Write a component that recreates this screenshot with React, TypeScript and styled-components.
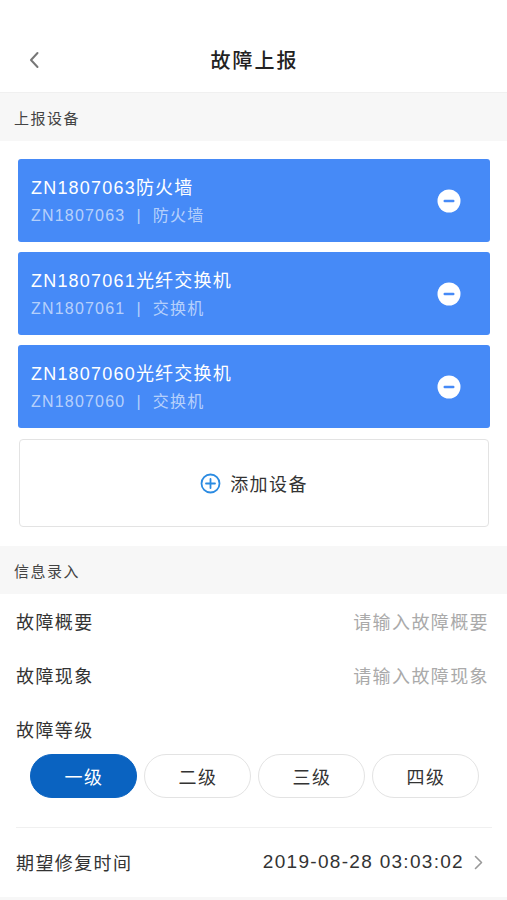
import React from "react";
import styled, { createGlobalStyle } from "styled-components";

const Global = createGlobalStyle`
  html, body { margin: 0; padding: 0; background: #ffffff; }
  body { font-family: "Noto Sans CJK SC", "Noto Sans", sans-serif; -webkit-font-smoothing: antialiased; }
  * { box-sizing: border-box; }
`;

const Page = styled.div`
  width: 507px;
  min-height: 900px;
  background: #fff;
  display: flex;
  flex-direction: column;
`;

const NavBar = styled.div`
  height: 93px;
  padding-top: 27px;
  display: grid;
  grid-template-columns: 70px 1fr 70px;
  align-items: center;
  border-bottom: 1px solid #f0f0f0;
`;

const Back = styled.div`
  display: flex;
  justify-content: center;
  padding-right: 2px;
`;

const Title = styled.div`
  text-align: center;
  font-size: 20px;
  font-weight: 500;
  color: #222;
  letter-spacing: 2px;
  padding-left: 2px;
`;

const SectionHead = styled.div`
  height: 48px;
  background: #f7f7f7;
  display: flex;
  align-items: center;
  padding-left: 14px;
  font-size: 15px;
  letter-spacing: 1.5px;
  color: #444;
`;

const DeviceList = styled.div`
  display: flex;
  flex-direction: column;
  gap: 10px;
  padding: 18px 17px 19px 18px;
`;

const DeviceCard = styled.div`
  height: 83px;
  background: #468af7;
  border-radius: 3px;
  display: flex;
  align-items: center;
  justify-content: space-between;
  padding: 0 29px 0 13px;
`;

const DeviceInfo = styled.div`
  display: flex;
  flex-direction: column;
  gap: 4px;
`;

const DeviceName = styled.div`
  font-size: 18px;
  color: #fff;
  font-family: "Liberation Sans", "Noto Sans CJK SC", sans-serif;
  letter-spacing: 1.2px;
  line-height: 26px;
`;

const DeviceMeta = styled.div`
  font-size: 16px;
  color: rgba(255, 255, 255, 0.62);
  font-family: "Liberation Sans", "Noto Sans CJK SC", sans-serif;
  letter-spacing: 1.2px;
  line-height: 22px;
  display: flex;
  gap: 11px;
`;

const AddBox = styled.div`
  height: 88px;
  margin: 1px 1px 0 1px;
  border: 1px solid #e3e3e3;
  border-radius: 4px;
  display: flex;
  align-items: center;
  justify-content: center;
  gap: 9px;
  font-size: 18px;
  letter-spacing: 1.4px;
  color: #333;
`;

const FormBody = styled.div`
  display: flex;
  flex-direction: column;
  padding: 0 15px 0 16px;
`;

const FieldRow = styled.div`
  height: 54px;
  display: flex;
  align-items: center;
  justify-content: space-between;
  font-size: 18px;
  letter-spacing: 1.4px;
  color: #333;
`;

const Placeholder = styled.span`
  color: #aaa;
  font-size: 18px;
  padding-right: 3px;
`;

const LevelLabel = styled.div`
  font-size: 18px;
  letter-spacing: 1.4px;
  color: #333;
  padding-top: 14px;
  height: 46px;
`;

const LevelRow = styled.div`
  display: flex;
  gap: 7px;
  padding: 6px 0 29px 14px;
  border-bottom: 1px solid #f0f0f0;
`;

const LevelBtn = styled.div<{ $active?: boolean }>`
  width: 107px;
  height: 44px;
  border-radius: 22px;
  display: flex;
  align-items: center;
  justify-content: center;
  font-size: 18px;
  letter-spacing: 1.4px;
  padding-left: 1px;
  background: ${(p) => (p.$active ? "#0a63c1" : "#fff")};
  color: ${(p) => (p.$active ? "#fff" : "#333")};
  border: 1px solid ${(p) => (p.$active ? "#0a63c1" : "#e3e3e3")};
`;

const TimeRow = styled.div`
  height: 68px;
  display: flex;
  align-items: center;
  justify-content: space-between;
  font-size: 18px;
  letter-spacing: 1.4px;
  color: #333;
`;

const TimeValue = styled.div`
  display: flex;
  align-items: center;
  gap: 10px;
  font-family: "Liberation Sans", "Noto Sans CJK SC", sans-serif;
  font-size: 19px;
  letter-spacing: 1.3px;
  color: #333;
  padding-right: 9px;
`;

const Footer = styled.div`
  flex: 1;
  background: #f7f7f7;
  margin-top: 1px;
`;

const MinusIcon = () => (
  <svg width="24" height="24" viewBox="0 0 24 24">
    <circle cx="12" cy="12" r="11.5" fill="#fff" />
    <rect x="6.5" y="10.8" width="11" height="2.4" rx="1.2" fill="#468af7" />
  </svg>
);

const PlusIcon = () => (
  <svg width="21" height="21" viewBox="0 0 21 21">
    <circle cx="10.5" cy="10.5" r="9" fill="none" stroke="#2b8be2" strokeWidth="1.8" />
    <path d="M10.5 6v9M6 10.5h9" stroke="#2b8be2" strokeWidth="1.8" strokeLinecap="round" />
  </svg>
);

const devices = [
  { code: "ZN1807063", name: "防火墙", type: "防火墙" },
  { code: "ZN1807061", name: "光纤交换机", type: "交换机" },
  { code: "ZN1807060", name: "光纤交换机", type: "交换机" },
];

const levels = ["一级", "二级", "三级", "四级"];

export default function App() {
  return (
    <Page>
      <Global />
      <NavBar>
        <Back>
          <svg width="12" height="20" viewBox="0 0 12 20">
            <path d="M9.5 3L3 10l6.5 7" fill="none" stroke="#777" strokeWidth="2" strokeLinecap="round" strokeLinejoin="round" />
          </svg>
        </Back>
        <Title>故障上报</Title>
        <div />
      </NavBar>
      <SectionHead>上报设备</SectionHead>
      <DeviceList>
        {devices.map((d) => (
          <DeviceCard key={d.code}>
            <DeviceInfo>
              <DeviceName>
                {d.code}
                {d.name}
              </DeviceName>
              <DeviceMeta>
                <span>{d.code}</span>
                <span>|</span>
                <span>{d.type}</span>
              </DeviceMeta>
            </DeviceInfo>
            <MinusIcon />
          </DeviceCard>
        ))}
        <AddBox>
          <PlusIcon />
          <span>添加设备</span>
        </AddBox>
      </DeviceList>
      <SectionHead>信息录入</SectionHead>
      <FormBody>
        <FieldRow>
          <span>故障概要</span>
          <Placeholder>请输入故障概要</Placeholder>
        </FieldRow>
        <FieldRow>
          <span>故障现象</span>
          <Placeholder>请输入故障现象</Placeholder>
        </FieldRow>
        <LevelLabel>故障等级</LevelLabel>
        <LevelRow>
          {levels.map((l, i) => (
            <LevelBtn key={l} $active={i === 0}>
              {l}
            </LevelBtn>
          ))}
        </LevelRow>
        <TimeRow>
          <span>期望修复时间</span>
          <TimeValue>
            <span>2019-08-28 03:03:02</span>
            <svg width="9" height="15" viewBox="0 0 9 15">
              <path d="M1.5 1.5l6 6-6 6" fill="none" stroke="#999" strokeWidth="1.6" strokeLinecap="round" strokeLinejoin="round" />
            </svg>
          </TimeValue>
        </TimeRow>
      </FormBody>
      <Footer />
    </Page>
  );
}
